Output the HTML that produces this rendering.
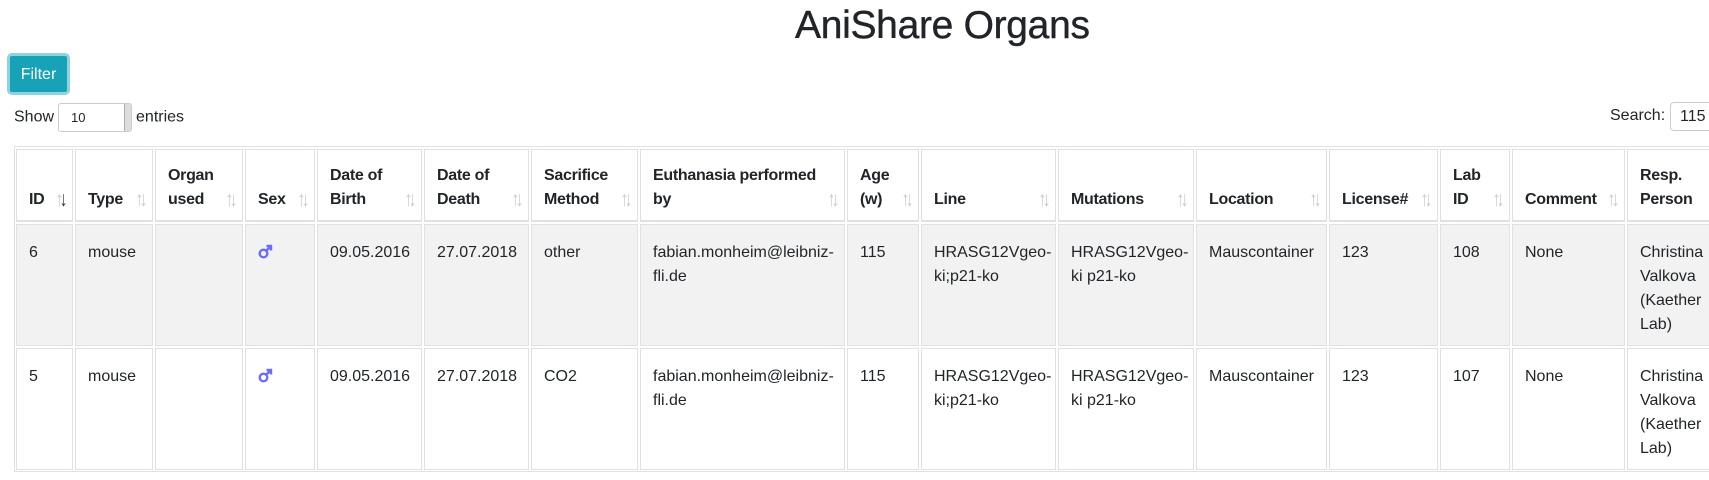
<!DOCTYPE html>
<html><head><meta charset="utf-8"><style>
*{box-sizing:border-box}
body{margin:0;width:1709px;height:480px;overflow:hidden;background:#fff;font-family:"Liberation Sans",Arial,sans-serif;color:#212529;font-size:16px;position:relative}
h1{position:absolute;left:795px;top:2px;margin:0;font-size:39px;font-weight:500;line-height:48px;color:#212529;letter-spacing:-0.3px;-webkit-text-stroke:0.4px #212529}
.btn{position:absolute;left:7px;top:53px;width:63px;height:42px;background:#17a2b8;color:#fff;border:3px solid #8fd3de;border-radius:5px;font-size:16px;line-height:38px;text-align:center}
.show{position:absolute;left:14px;top:103px;line-height:24px}
.sel{display:inline-block;vertical-align:middle;width:74px;height:29px;border:1px solid #ccc;border-radius:3px;margin:0 4px;font-size:13px;line-height:27px;padding-left:12px;position:relative}
.sel:after{content:"";position:absolute;right:0;top:0;width:6px;height:27px;background:#ddd;border-left:1px solid #aaa}
.srch{position:absolute;left:1610px;top:104px;line-height:24px}
.inp{position:absolute;left:1670px;top:102px;width:60px;height:29px;border:1px solid #ccc;border-radius:4px;padding-left:9px;line-height:27px;font-size:16px}
.wrap{position:absolute;left:14px;top:146px;border-top:1px solid #dee2e6;border-left:1px solid #dee2e6;width:1720px;height:326px;border-bottom:1px solid #dee2e6}
table{border-collapse:separate;border-spacing:2px;table-layout:fixed;width:1723px;position:absolute;left:-1px;top:0px}
th,td{border:1px solid #dee2e6;padding:16px 12px 8px;line-height:24px;text-align:left;vertical-align:top;position:relative}
th{vertical-align:bottom;font-weight:bold;border-bottom-width:2px;padding-top:14px;padding-bottom:8px;letter-spacing:-0.3px;height:73px}
th .s{position:absolute;right:7px;bottom:8px;color:#c8c8c8;font-weight:normal;font-size:21px;letter-spacing:-5px;line-height:24px;transform:scaleX(0.75)}
th .s b{color:#333;font-weight:normal}
tr.a td{background:#f2f2f2}
td{height:121px}
.m{display:inline-block;vertical-align:top;margin-top:3px}
</style></head><body>
<h1>AniShare Organs</h1>
<div class="btn">Filter</div>
<div class="show">Show<span class="sel">10</span>entries</div>
<div class="srch">Search:</div><div class="inp">115</div>
<div class="wrap"><table>
<colgroup><col style="width:57px"><col style="width:78px"><col style="width:88px"><col style="width:70px"><col style="width:105px"><col style="width:105px"><col style="width:107px"><col style="width:205px"><col style="width:72px"><col style="width:135px"><col style="width:136px"><col style="width:131px"><col style="width:109px"><col style="width:70px"><col style="width:113px"><col style="width:110px"></colgroup>
<thead><tr>
<th>ID<span class="s">↑<b>↓</b></span></th><th>Type<span class="s">↑↓</span></th><th>Organ used<span class="s">↑↓</span></th><th>Sex<span class="s">↑↓</span></th><th>Date of Birth<span class="s">↑↓</span></th><th>Date of Death<span class="s">↑↓</span></th><th>Sacrifice Method<span class="s">↑↓</span></th><th>Euthanasia performed by<span class="s">↑↓</span></th><th>Age (w)<span class="s">↑↓</span></th><th>Line<span class="s">↑↓</span></th><th>Mutations<span class="s">↑↓</span></th><th>Location<span class="s">↑↓</span></th><th>License#<span class="s">↑↓</span></th><th>Lab ID<span class="s">↑↓</span></th><th>Comment<span class="s">↑↓</span></th><th>Resp. Person<span class="s">↑↓</span></th>
</tr></thead>
<tbody>
<tr class="a"><td>6</td><td>mouse</td><td></td><td><svg class="m" width="15" height="15" viewBox="0 0 15 15"><circle cx="5.5" cy="9.5" r="3.8" fill="none" stroke="#6b6bff" stroke-width="2.4"/><path d="M8 7 L13 2 M8.5 2 H13 V6.5" fill="none" stroke="#6b6bff" stroke-width="2.4"/></svg></td><td>09.05.2016</td><td>27.07.2018</td><td>other</td><td>fabian.monheim@leibniz-fli.de</td><td>115</td><td>HRASG12Vgeo-ki;p21-ko</td><td>HRASG12Vgeo-ki p21-ko</td><td>Mauscontainer</td><td>123</td><td>108</td><td>None</td><td>Christina Valkova (Kaether Lab)</td></tr>
<tr><td>5</td><td>mouse</td><td></td><td><svg class="m" width="15" height="15" viewBox="0 0 15 15"><circle cx="5.5" cy="9.5" r="3.8" fill="none" stroke="#6b6bff" stroke-width="2.4"/><path d="M8 7 L13 2 M8.5 2 H13 V6.5" fill="none" stroke="#6b6bff" stroke-width="2.4"/></svg></td><td>09.05.2016</td><td>27.07.2018</td><td>CO2</td><td>fabian.monheim@leibniz-fli.de</td><td>115</td><td>HRASG12Vgeo-ki;p21-ko</td><td>HRASG12Vgeo-ki p21-ko</td><td>Mauscontainer</td><td>123</td><td>107</td><td>None</td><td>Christina Valkova (Kaether Lab)</td></tr>
</tbody></table></div>
</body></html>
